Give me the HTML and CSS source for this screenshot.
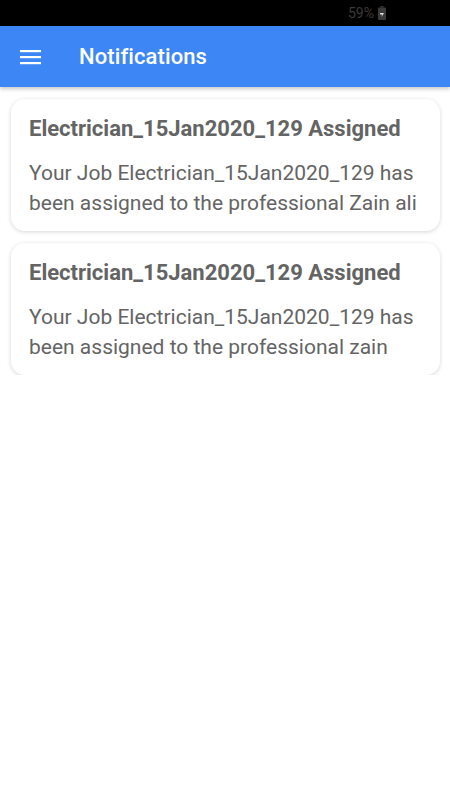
FILE: index.html
```html
<!DOCTYPE html>
<html>
<head>
<meta charset="utf-8">
<link rel="stylesheet" href="styles.css">
</head>
<body>
<div class="status">
  <span class="battery-text">59%</span>
  <svg class="battery" width="8" height="14" viewBox="0 0 8 14">
    <rect x="2.5" y="0" width="3" height="1.5" fill="#3a3a3a"/>
    <rect x="0" y="1.5" width="8" height="12.5" rx="1" fill="#3a3a3a"/>
    <path d="M2 7 H6 L3.5 11 L4 8.5 H2 Z" fill="#ddd"/>
  </svg>
</div>
<header class="appbar">
  <svg class="menu" width="22" height="16" viewBox="0 0 22 16">
    <rect x="0" y="1" width="21" height="2.2" fill="#fff"/>
    <rect x="0" y="7" width="21" height="2.2" fill="#fff"/>
    <rect x="0" y="13" width="21" height="2.2" fill="#fff"/>
  </svg>
  <h1 class="title">Notifications</h1>
</header>
<main class="list">
  <div class="card">
    <div class="card-title">Electrician_15Jan2020_129 Assigned</div>
    <div class="card-body">Your Job Electrician_15Jan2020_129 has been assigned to the professional Zain ali</div>
  </div>
  <div class="card">
    <div class="card-title">Electrician_15Jan2020_129 Assigned</div>
    <div class="card-body">Your Job Electrician_15Jan2020_129 has been assigned to the professional zain</div>
  </div>
</main>
</body>
</html>
```
FILE: styles.css
```css
html, body {
  margin: 0;
  padding: 0;
  background: #fff;
  font-family: Roboto, "Noto Sans", sans-serif;
}
.status {
  height: 26px;
  background: #000;
  display: flex;
  justify-content: flex-end;
  align-items: center;
  padding-right: 64px;
  gap: 4px;
}
.battery-text {
  color: #3a3a3a;
  font-size: 14px;
}
.battery {
  display: block;
}
.appbar {
  height: 61px;
  background: #3c86f6;
  display: flex;
  align-items: center;
  padding-left: 20px;
  box-shadow: 0 2px 4px rgba(0,0,0,0.22);
}
.menu {
  display: block;
}
.title {
  margin: 0 0 0 37px;
  color: #fff;
  font-size: 22px;
  font-weight: 500;
  letter-spacing: 0.1px;
}
.list {
  padding: 12px 10px 0 11px;
  display: flex;
  flex-direction: column;
  gap: 12px;
}
.card {
  background: #fff;
  border-radius: 14px;
  box-shadow: 0 1px 4px rgba(0,0,0,0.16);
  padding: 15px 18px 13px 18px;
}
.card-title {
  color: #646464;
  font-size: 22px;
  font-weight: 700;
  line-height: 30px;
  margin-bottom: 14px;
}
.card-body {
  color: #646464;
  font-size: 21px;
  line-height: 30px;
}
```
